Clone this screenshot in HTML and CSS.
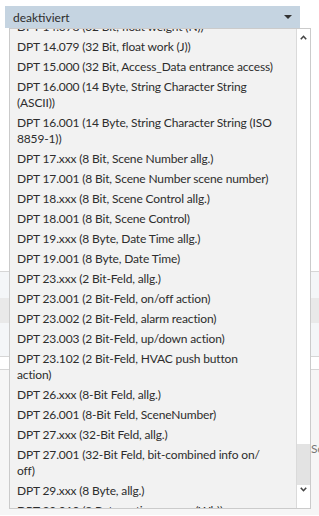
FILE: index.html
```html
<!DOCTYPE html>
<html lang="de">
  <head>
    <meta charset="UTF-8" />
    <meta name="viewport" content="width=device-width, initial-scale=1.0" />
    <title>Datenpunkttyp</title>
    <link rel="stylesheet" href="styles.css">
  </head>
  <body>
    <div class="select">
      <span class="select-value">deaktiviert</span>
      <svg class="select-caret" width="8" height="4" viewBox="0 0 8 4">
        <path d="M0 0H8L4 4Z" />
      </svg>

      <div class="dropdown">
        <div class="options">
          <ul>
            <li>DPT 14.078 (32 Bit, float weight (N))</li>
            <li>DPT 14.079 (32 Bit, float work (J))</li>
            <li>DPT 15.000 (32 Bit, Access_Data entrance access)</li>
            <li>DPT 16.000 (14 Byte, String Character String (ASCII))</li>
            <li>DPT 16.001 (14 Byte, String Character String (ISO 8859-1))</li>
            <li>DPT 17.xxx (8 Bit, Scene Number allg.)</li>
            <li>DPT 17.001 (8 Bit, Scene Number scene number)</li>
            <li>DPT 18.xxx (8 Bit, Scene Control allg.)</li>
            <li>DPT 18.001 (8 Bit, Scene Control)</li>
            <li>DPT 19.xxx (8 Byte, Date Time allg.)</li>
            <li>DPT 19.001 (8 Byte, Date Time)</li>
            <li>DPT 23.xxx (2 Bit-Feld, allg.)</li>
            <li>DPT 23.001 (2 Bit-Feld, on/off action)</li>
            <li>DPT 23.002 (2 Bit-Feld, alarm reaction)</li>
            <li>DPT 23.003 (2 Bit-Feld, up/down action)</li>
            <li>DPT 23.102 (2 Bit-Feld, HVAC push button<br>action)</li>
            <li>DPT 26.xxx (8-Bit Feld, allg.)</li>
            <li>DPT 26.001 (8-Bit Feld, SceneNumber)</li>
            <li>DPT 27.xxx (32-Bit Feld, allg.)</li>
            <li>DPT 27.001 (32-Bit Feld, bit-combined info on/<wbr>off)</li>
            <li>DPT 29.xxx (8 Byte, allg.)</li>
            <li>DPT 29.010 (8 Byte, active energy (Wh))</li>
            <li>DPT 29.011 (8 Byte, apparant energy (VAh))</li>
          </ul>
        </div>
        <div class="scrollbar">
          <div class="scroll-btn up">
            <svg width="7" height="5" viewBox="0 0 7 5">
              <path d="M0.8 4.2L3.5 1.3L6.2 4.2" />
            </svg>
          </div>
          <div class="scroll-track">
            <div class="scroll-thumb"></div>
          </div>
          <div class="scroll-btn down">
            <svg width="7" height="5" viewBox="0 0 7 5">
              <path d="M0.8 0.8L3.5 3.7L6.2 0.8" />
            </svg>
          </div>
        </div>
      </div>
    </div>

    <div class="grid">
      <div class="row alt"></div>
      <div class="row hl"></div>
      <div class="row alt tall"></div>
    </div>
    <div class="gap"></div>
    <div class="panel">
      <p class="prop-value">Scene</p>
    </div>
  </body>
</html>
```

FILE: styles.css
```css
:root {
  --text-color: #2d2d2d;
  --select-bg: #c5d4e1;
  --list-bg: #f2f2f2;
  --line-color: #d6d6d6;
}

body {
  font-family: Lato, "Open Sans", sans-serif;
  font-size: 12px;
  margin: 0;
  padding-top: 6px;
  color: var(--text-color);
  background-color: white;
}

.select {
  position: relative;
  display: flex;
  align-items: center;
  justify-content: space-between;
  box-sizing: border-box;
  width: 295px;
  height: 22px;
  margin-left: 5px;
  padding: 0 8px 0 8px;
  background-color: var(--select-bg);
}

.select-caret path {
  fill: #333;
}

.dropdown {
  position: absolute;
  top: 100%;
  left: 4px;
  z-index: 10;
  display: flex;
  box-sizing: border-box;
  width: 302px;
  height: 481px;
  border: 1px solid #cbcbcb;
  background-color: var(--list-bg);
}

.options {
  flex: 1;
  overflow: hidden;
}

.options ul {
  list-style: none;
  margin: -12px 0 0 0;
  padding: 0;
}

.options li {
  padding: 2px 20px 2px 7px;
  line-height: 16px;
  letter-spacing: -0.15px;
}

.scrollbar {
  display: flex;
  flex-direction: column;
  width: 13px;
  border-left: 1px solid #dadada;
  background-color: white;
}

.scroll-btn {
  display: flex;
  justify-content: center;
}

.scroll-btn path {
  fill: none;
  stroke: #444;
  stroke-width: 1.6;
}

.scroll-btn.up {
  height: 16px;
  align-items: center;
}

.scroll-btn.down {
  height: 23px;
  box-sizing: border-box;
  padding-top: 2px;
}

.scroll-track {
  flex: 1;
  display: flex;
  flex-direction: column;
}

.scroll-thumb {
  margin-top: auto;
  height: 41px;
  background-color: #e3e3e3;
}

.grid {
  margin-top: 243px;
  border-top: 1px solid var(--line-color);
  border-bottom: 1px solid var(--line-color);
}

.row {
  height: 26px;
}

.row.alt {
  background-color: #f4f6f8;
}

.row.hl {
  height: 25px;
  background-color: #e9e9e9;
}

.row.tall {
  height: 33px;
}

.gap {
  height: 12px;
}

.panel {
  min-height: 146px;
  box-sizing: border-box;
  padding-top: 71px;
  border-top: 1px solid var(--line-color);
  background-color: #f6f6f6;
}

.prop-value {
  margin: 0;
  padding-left: 311px;
  line-height: 16px;
  white-space: nowrap;
  color: #777;
}
```
